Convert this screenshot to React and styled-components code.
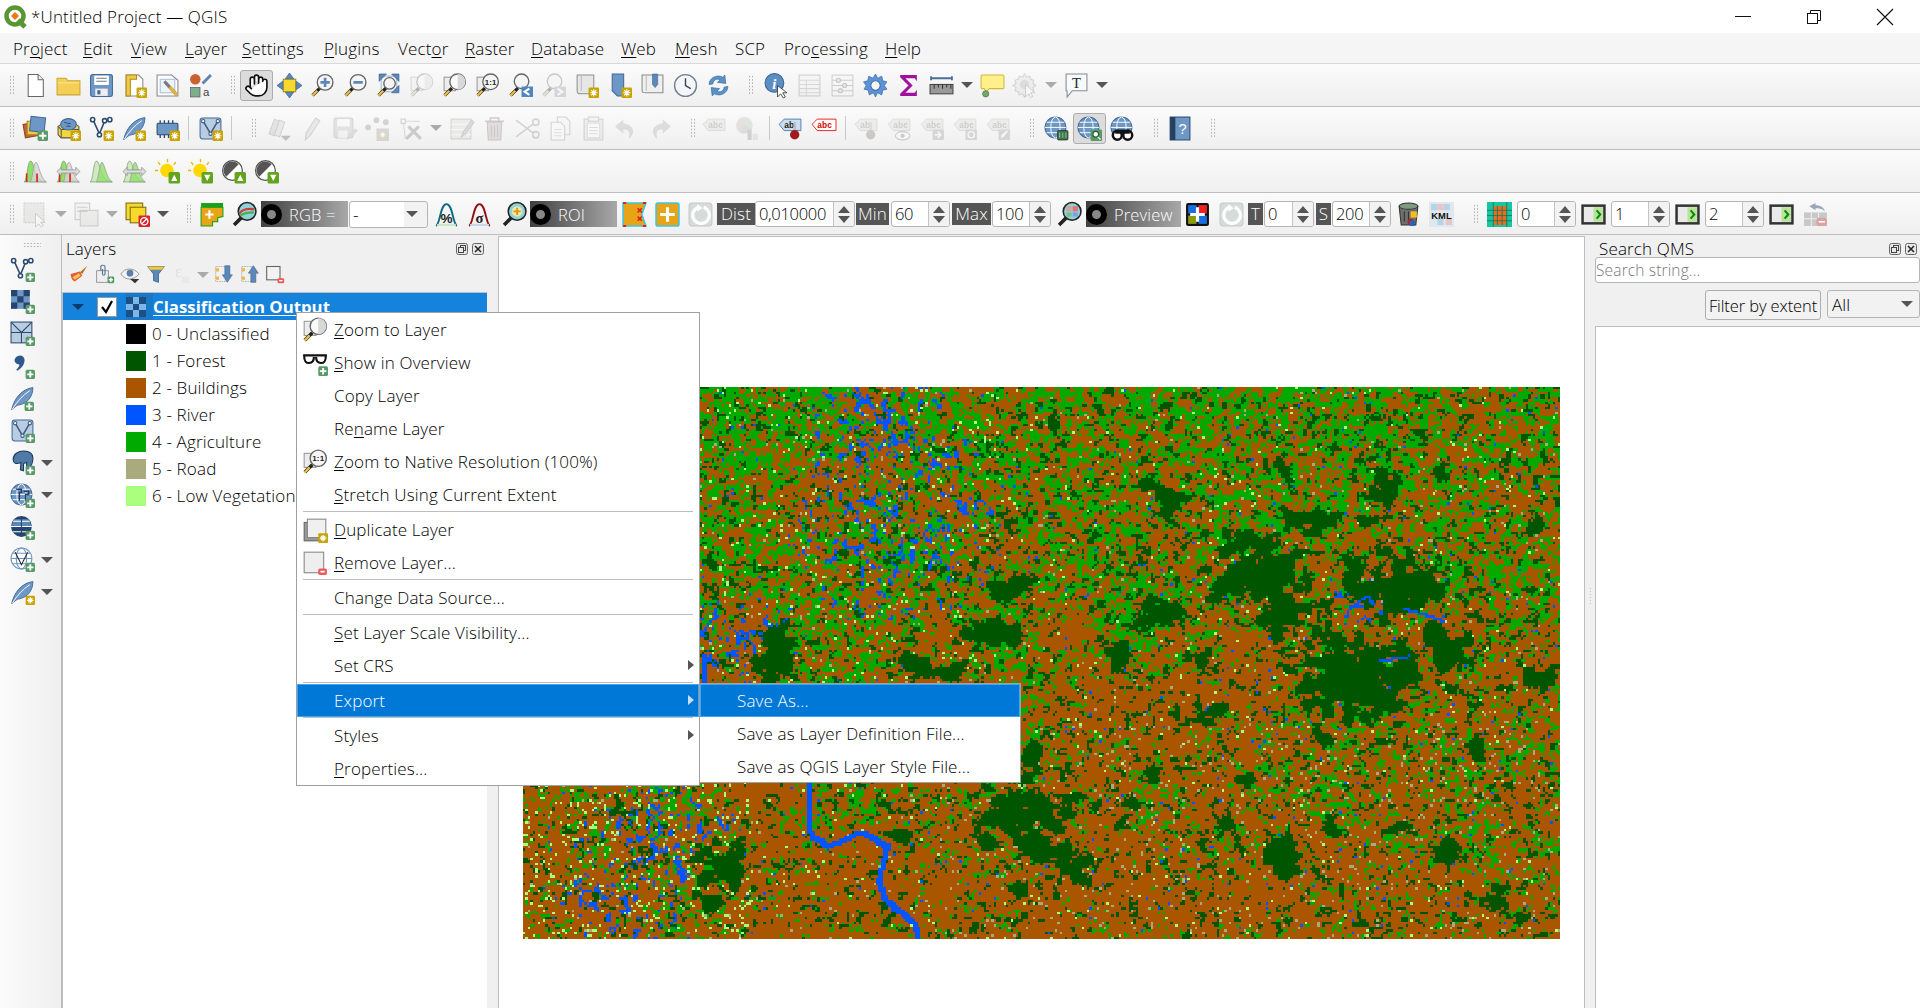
import React, { useEffect, useRef } from 'react';
import styled, { createGlobalStyle } from 'styled-components';
import { Hand } from 'lucide-react';

const FONT = '"Open Sans", "Noto Sans", "Liberation Sans", sans-serif';

const GlobalStyle = createGlobalStyle`
  html, body { margin: 0; padding: 0; overflow: hidden; background: #f0f0f0; }
  body { font-family: ${FONT}; font-size: 17px; font-weight: 300; color: #000; letter-spacing: 0.15px; }
`;

// ---- small icon parts ----
const BLUE = '#6d97c4';
const BLUE_D = '#44699a';

const Star = ({ x = 14, y = 14, s = 10 }) => (
  <g>
    <rect x={x} y={y} width={s} height={s} rx="1" fill="#c9a300" />
    <path
      d={`M${x + s / 2} ${y + 1.5}v${s - 3}M${x + 1.5} ${y + s / 2}h${s - 3}M${x + 2.5} ${y + 2.5}l${s - 5} ${s - 5}M${x + s - 2.5} ${y + 2.5}l${5 - s} ${s - 5}`}
      stroke="#fff"
      strokeWidth="1.1"
    />
  </g>
);
const PlusB = ({ x = 15, y = 15, s = 9, c = '#5a9a68' }) => (
  <g>
    <rect x={x} y={y} width={s} height={s} rx="1.5" fill={c} />
    <path d={`M${x + s / 2} ${y + 1.5}v${s - 3}M${x + 1.5} ${y + s / 2}h${s - 3}`} stroke="#fff" strokeWidth="1.8" />
  </g>
);
const MinusB = () => (
  <g>
    <rect x="15" y="17" width="8" height="6" rx="1.5" fill="#ee5a5a" />
    <path d="M17 20h4" stroke="#fff" strokeWidth="1.6" />
  </g>
);
const Loupe = ({ cx = 14.5, cy = 9, r = 7.5, fill = '#f5f5f5' }) => (
  <g>
    <line x1="2.5" y1="21.5" x2="9.5" y2="14.5" stroke="#222" strokeWidth="3.2" />
    <line x1="2.5" y1="21.5" x2="7" y2="17" stroke="#eebc3f" strokeWidth="2.2" />
    <circle cx={cx} cy={cy} r={r} fill={fill} stroke="#666" strokeWidth="1.3" />
  </g>
);
const HalfLoupe = () => (
  <g>
    <rect x="2" y="4" width="11" height="13" fill="#ececec" stroke="#999" />
    <Loupe cx={15} cy={8.5} r={7.5} fill="#fafafa" />
    <path d="M15 1a7.5 7.5 0 0 1 0 15z" fill="#d8d8d8" />
  </g>
);
const Globe = ({ cx = 11, cy = 11, r = 10 }) => (
  <g>
    <circle cx={cx} cy={cy} r={r} fill={BLUE} stroke={BLUE_D} />
    <ellipse cx={cx} cy={cy} rx={r * 0.45} ry={r} fill="none" stroke="#fff" strokeWidth="0.9" />
    <path d={`M${cx - r} ${cy}h${2 * r}M${cx - r + 1.5} ${cy - r / 2}h${2 * r - 3}M${cx - r + 1.5} ${cy + r / 2}h${2 * r - 3}`} stroke="#fff" strokeWidth="0.9" />
  </g>
);
const Vee = ({ c = '#2b4a6f' }) => (
  <g fill="none" stroke={c} strokeWidth="1.5">
    <path d="M4 4l6 13 5-12 5-1" />
    <circle cx="3.5" cy="3.5" r="2" fill="#fff" />
    <circle cx="10" cy="18" r="2" fill="#fff" />
    <circle cx="15" cy="4.5" r="2" fill="#fff" />
    <circle cx="20" cy="3.5" r="2" fill="#fff" />
  </g>
);
const Feather = () => (
  <g>
    <path d="M1.5 23C4 12 11 3 22 1.5 22 9 18 17 7 18.5L3 21.5z" fill={BLUE} stroke={BLUE_D} strokeWidth="0.9" />
    <path d="M2 22.5C7 15 12 9 19 4.5" stroke="#fff" strokeWidth="0.9" fill="none" />
  </g>
);
const MeshV = () => (
  <g>
    <rect x="2" y="2" width="20" height="20" rx="2.5" fill="#b8cce2" stroke={BLUE_D} />
    <path d="M5 5l7 12 7-12" fill="none" stroke="#3a5a80" strokeWidth="1.4" />
    <circle cx="5" cy="5" r="1.6" fill="#fff" stroke="#3a5a80" />
    <circle cx="12" cy="17" r="1.6" fill="#fff" stroke="#3a5a80" />
    <circle cx="19" cy="5" r="1.6" fill="#fff" stroke="#3a5a80" />
  </g>
);
const Checker = () => (
  <g>
    <rect x="1" y="1" width="18" height="18" fill={BLUE} />
    <path d="M1 1h6v6H1zM13 1h6v6h-6zM7 7h6v6H7zM1 13h6v6H1zM13 13h6v6h-6z" fill="#26456e" />
  </g>
);
const Hist = ({ red, arrows, gray }) => (
  <g>
    <path d="M1 22C4 22 4 3 7 2c2.5-.5 3 6 5 11s4 8 10 9z" fill={gray ? '#cfe9c0' : '#8fe06a'} stroke="#7f9f70" strokeWidth="0.7" />
    <path d="M7 22c2-2 3-18 5.5-19 2.5 1 4 16 10 19z" fill={gray ? '#8fe06a' : '#d6d6d6'} fillOpacity=".8" stroke="#999" strokeWidth="0.7" />
    {red && <path d="M3.5 14v8M13.5 14v8" stroke="#e22222" strokeWidth="1.6" />}
    {arrows && <path d="M1 12l4-4v2.5h14V8l4 4-4 4v-2.5H5V16z" fill="#ddd" stroke="#888" strokeWidth="0.7" />}
  </g>
);
const UpDown = ({ down }) => (
  <g>
    <rect x="13" y="12.5" width="11" height="11" rx="1.5" fill="#63a41f" />
    <path d={down ? 'M15.5 15h6l-3 6z' : 'M18.5 15l3 6h-6z'} fill="#fff" />
  </g>
);
const Sun = ({ down }) => (
  <g>
    <path d="M12 0v3M3 3l2 2.5M20 3l-2 2.5M0 11h3" stroke="#e6b800" strokeWidth="1.3" />
    <circle cx="11.5" cy="11" r="6.5" fill="#ffd800" />
    <UpDown down={down} />
  </g>
);
const Contrast = ({ down }) => (
  <g>
    <circle cx="11" cy="11" r="9.5" fill="#fff" stroke="#555" strokeWidth="1.2" />
    <path d="M11 2.5a8.5 8.5 0 0 0-6 14.5L17 5a8.5 8.5 0 0 0-6-2.5z" fill="#555" />
    <UpDown down={down} />
  </g>
);
const Tag = ({ c = '#ddd8c0', t = 'abc', s = '#999', tc = '#777', w = 21 }) => (
  <g>
    <path d={`M1 8l5-5h${w - 5}v11H6z`} fill={c} stroke={s} strokeWidth="0.8" />
    <text x="6" y="11.5" fontSize="8" fontWeight="700" fontFamily="Liberation Sans, sans-serif" fill={tc}>{t}</text>
  </g>
);
const Tile = () => (
  <g>
    <rect x="1.5" y="3.5" width="21" height="17" fill="#e9e9e9" stroke="#333" strokeWidth="2.4" />
    <rect x="12" y="5" width="9" height="14" fill="#b7e39a" />
    <path d="M15 8l3.5 4-3.5 4" fill="none" stroke="#0a8a0a" strokeWidth="2" />
  </g>
);

// every toolbar / panel icon, drawn on a 24 x 24 grid
const ICONS = {
  new: <><path d="M5 1.5h9.5l5 5v16H5z" fill="#fff" stroke="#666" /><path d="M14.5 1.5v5h5" fill="#eee" stroke="#666" /></>,
  open: <><path d="M1 5h8.5l2 2.5H23V21H1z" fill="#f5cf55" stroke="#c8a53a" /><path d="M1.5 9.5h21" stroke="#fbe48c" /></>,
  save: <><rect x="1.5" y="1.5" width="21" height="21" rx="2" fill={BLUE} stroke={BLUE_D} /><rect x="5" y="2.5" width="14" height="9" fill="#fff" /><path d="M7 5h10M7 8h10" stroke="#777" /><rect x="6" y="15" width="12" height="7" fill="#eee" /><rect x="8" y="16.5" width="3" height="4" fill={BLUE_D} /></>,
  newLayout: <><path d="M4 2h12l4 4v16H4z" fill="#fff" stroke="#888" /><path d="M4 2h10v4H8v16H4z" fill="#f0c94a" stroke="#b08a10" /><Star /></>,
  layouts: <><path d="M2 2h14l6 5v15H2z" fill="#fff" stroke="#888" /><rect x="5" y="6" width="14" height="13" fill="#eef2fa" stroke="#a9bcd8" /><path d="M9 8l12 13" stroke="#7a7a7a" strokeWidth="3" /><path d="M14 13.5l7 7.5" stroke="#e2b53a" strokeWidth="3" /></>,
  styleMgr: <><circle cx="7" cy="6" r="5" fill="#c8622e" /><path d="M14 10l8-8" stroke="#5b86b5" strokeWidth="2.8" /><rect x="2.5" y="14" width="9" height="9" fill="#7fae8a" stroke="#557" strokeWidth="0.7" /><text x="14.5" y="22.5" fontSize="11" fontFamily="Liberation Sans, sans-serif" fill="#444">a</text></>,
  pan: <Hand x={0} y={0} width={24} height={24} fill="#fff" stroke="#111" strokeWidth={1.6} />,
  panSel: <><rect x="6" y="6" width="12" height="12" fill="#f6d92b" stroke="#a08a20" /><path d="M12 0l4 5.5H8zM12 24l-4-5.5h8zM0 12l5.5-4v8zM24 12l-5.5 4V8z" fill="#5b88b7" stroke="#3c6390" strokeWidth="0.7" /></>,
  zoomIn: <><Loupe /><path d="M14.5 4.5v9M10 9h9" stroke="#5b88b7" strokeWidth="2.6" /></>,
  zoomOut: <><Loupe /><path d="M10 9h9" stroke="#5b88b7" strokeWidth="2.6" /></>,
  zoomFull: <><rect x="5" y="3" width="15" height="15" fill="none" stroke="#9bb5d2" /><path d="M3 1h7L3 8zM22 1h-7l7 7zM22 19h-7l7-7z" fill="#5b88b7" stroke="#3c6390" strokeWidth="0.7" /><Loupe cx={13} cy={10} r={5.5} /></>,
  zoomSel: <HalfLoupe />,
  zoomLayer: <HalfLoupe />,
  zoomNative: <><rect x="2" y="4" width="11" height="13" fill="#ececec" stroke="#999" /><Loupe cx={15} cy={8.5} r={7.5} /><text x="15" y="11.5" fontSize="7.5" fontWeight="700" textAnchor="middle" fontFamily="Liberation Sans, sans-serif" fill="#222">1:1</text></>,
  zoomLast: <><Loupe cx={13} cy={8} r={7} /><rect x="13" y="13" width="11" height="10" fill="#4f86bd" /><path d="M20.5 15l-4.5 3 4.5 3" fill="none" stroke="#fff" strokeWidth="2" /></>,
  zoomNext: <><Loupe cx={13} cy={8} r={7} /><rect x="13" y="13" width="11" height="10" fill="#9a9a9a" /><path d="M16 15l4.5 3-4.5 3" fill="none" stroke="#fff" strokeWidth="2" /></>,
  newMap: <><path d="M3 2h16v18H6c-2 0-3-1-3-3z" fill="#e6e6e6" stroke="#8f8f8f" /><path d="M7 2v15" stroke="#bbb" /><Star /></>,
  newBookmark: <><path d="M5 1h11v15l4 6H10l-5-5z" fill="#6d97c4" stroke={BLUE_D} /><Star /></>,
  bookmarks: <><path d="M2 2h20v17H6c-3 0-4 0-4-3z" fill="#efefef" stroke="#8a8a8a" /><path d="M6 2v15" stroke="#bbb" /><path d="M12 1h5v10l-2.5 3-2.5-3z" fill="#5b88b7" stroke={BLUE_D} strokeWidth="0.6" /></>,
  clock: <><circle cx="12" cy="12" r="10.5" fill="#f4f6f9" stroke="#6f7f92" strokeWidth="1.3" /><path d="M12 5v7l5 3" fill="none" stroke="#33414f" strokeWidth="1.3" /></>,
  refresh: <><path d="M3 11c0-6 7-10 13-7l2-2 1 8-8-1 2.5-2.5c-3-1.5-6.5 0-7 4z" fill="#5b93c9" stroke="#3b6d9f" strokeWidth="0.7" /><path d="M21 13c0 6-7 10-13 7l-2 2-1-8 8 1-2.5 2.5c3 1.5 6.5 0 7-4z" fill="#5b93c9" stroke="#3b6d9f" strokeWidth="0.7" /></>,
  identify: <><circle cx="10" cy="9.5" r="9" fill="#5b8fc4" stroke="#3c6390" /><text x="10" y="15" fontSize="14" fontWeight="700" fontStyle="italic" textAnchor="middle" fontFamily="Liberation Serif, serif" fill="#fff">i</text><path d="M13 12v11l3-3 2.5 4 2-1-2.5-4h4z" fill="#fff" stroke="#333" strokeWidth="0.8" /></>,
  attrTable: <><rect x="2" y="2" width="20" height="20" fill="#f2f2f2" stroke="#777" /><path d="M2 7h20M2 11h20M2 15h20M2 19h20M9 7v15" stroke="#999" /></>,
  abacus: <><rect x="2" y="2" width="20" height="20" fill="#f6f6f6" stroke="#777" /><path d="M2 7h20M2 12h20M2 17h20" stroke="#777" /><circle cx="8" cy="7" r="2" fill="#ccc" stroke="#666" /><circle cx="14" cy="12" r="2" fill="#ccc" stroke="#666" /><circle cx="10" cy="17" r="2" fill="#ccc" stroke="#666" /></>,
  gear: <><path d="M12 1l2 4 4-2 1 4.5 4 1-2.5 3.5 2.5 3.5-4 1-1 4.5-4-2-2 4-2-4-4 2-1-4.5-4-1L3 12 .5 8.5l4-1L5.5 3l4 2z" fill="#5b93d6" stroke="#3c6ea8" strokeWidth="0.7" /><circle cx="12" cy="12" r="4.5" fill="#f5f5f5" stroke="#3c6ea8" /></>,
  sigma: <path d="M4 2h16v6l-2-3H9l7 7-7 7h9l2-3v6H4v-2l8-8-8-8z" fill="#a0119f" />,
  ruler: <><path d="M2 5h20M2 3v4M22 3v4" stroke="#4a6f99" strokeWidth="1.8" /><rect x="1" y="11" width="22" height="9" fill="#999" stroke="#444" /><path d="M5 11v4M9 11v3M13 11v4M17 11v3M21 11v4" stroke="#333" /></>,
  mapTip: <><path d="M2 2h20a1 1 0 0 1 1 1v11a1 1 0 0 1-1 1H9l-3 3-2-3H2a1 1 0 0 1-1-1V3a1 1 0 0 1 1-1z" fill="#fff08c" stroke="#d4b73a" /><circle cx="5.5" cy="20" r="3" fill="#7aa56f" stroke="#47783e" strokeWidth="0.7" /></>,
  tipAction: <><path d="M11 1l2 3 3-1 1 3 3 1-1 3 3 2-3 2 1 3-3 1-1 3-3-1-2 3-2-3-3 1-1-3-3-1 1-3-3-2 3-2-1-3 3-1 1-3 3 1z" fill="#ddd" stroke="#888" /><circle cx="11" cy="11" r="4.5" fill="#aaa" /><path d="M12 11v12l3-3 2 3.5 2-1-2-3.5h4z" fill="#fff" stroke="#555" strokeWidth="0.7" /></>,
  textAnn: <><path d="M2 1h20v16H8l-5 6v-6H2z" fill="#f4fbff" stroke="#8a8a8a" /><text x="12" y="14" fontSize="14" textAnchor="middle" fontFamily="Liberation Serif, serif" fill="#222">T</text></>,

  addLayers: <><rect x="1" y="7" width="12" height="13" fill="#c8622e" stroke="#8f4420" transform="rotate(-10 7 13)" /><rect x="4" y="5" width="12" height="13" fill="#f0c94a" stroke="#a08a20" /><rect x="7" y="1" width="14" height="14" fill={BLUE} stroke={BLUE_D} transform="rotate(6 14 8)" /><PlusB x={14} y={14} s={10} /></>,
  geoPkg: <><path d="M2 10l10-7 10 7v11H5L2 18z" fill="#f2d640" stroke="#555" /><path d="M2 10l3 3h17M5 13v8" fill="none" stroke="#555" /><ellipse cx="12" cy="8" rx="7.5" ry="5.5" fill={BLUE} stroke={BLUE_D} /><path d="M8 6c2 0 3 2 6 1M10 10c2-1 3 0 4 0" stroke="#2c4a6e" fill="none" /><Star /></>,
  newVec: <><Vee /><Star /></>,
  newFeather: <><Feather /><Star x={13} y={14} /></>,
  chip: <><rect x="2" y="7" width="20" height="11" rx="1" fill={BLUE} stroke="#2c4a6e" /><path d="M5 4v3M9 4v3M13 4v3M17 4v3M5 18v3M9 18v3M13 18v3" stroke="#2c4a6e" strokeWidth="1.3" /><Star /></>,
  newMesh: <><MeshV /><Star /></>,
  toggleEdit: <><path d="M3 17l5-14 5 2-5 14z" fill="#bbb" stroke="#888" /><path d="M8 18l5-14 5 2-5 14z" fill="#ccc" stroke="#888" /><path d="M14 19h10l-5 5z" fill="#555" /></>,
  pencil: <path d="M6 23l1-7 9-14 4 2.5-9 14z" fill="#ccc" stroke="#888" />,
  saveEdit: <><rect x="2" y="2" width="18" height="19" rx="2" fill="#bbb" stroke="#888" /><rect x="5" y="3" width="12" height="7" fill="#fff" /><rect x="6" y="14" width="9" height="7" fill="#eee" /><path d="M14 23l1-4 7-7 3 2-7 7z" fill="#aaa" /></>,
  nodes: <><circle cx="3" cy="11" r="2.8" fill="#888" /><circle cx="11" cy="4" r="2.8" fill="#888" /><circle cx="20" cy="6" r="2.8" fill="#888" /><rect x="11" y="12" width="12" height="12" fill="#999" /><Star x={13} y={14} s={8} /></>,
  vertexTool: <><path d="M5 5h16M5 5l2 17" stroke="#999" fill="none" /><rect x="3" y="3" width="4" height="4" fill="#fff" stroke="#777" /><path d="M8 22l12-12M10 10l12 12" stroke="#777" strokeWidth="3" /></>,
  attrEdit: <><rect x="2" y="3" width="19" height="19" fill="#d8d8c8" stroke="#888" /><path d="M2 8h19M2 13h19M2 18h19" stroke="#fff" /><path d="M12 20l2-5 8-11 2 2-8 11z" fill="#aaa" stroke="#777" /></>,
  trash: <><path d="M3 5h18M8 5V2h8v3" fill="none" stroke="#966" strokeWidth="1.5" /><path d="M5 6h14l-1 17H6z" fill="#c9a8a8" stroke="#866" /><path d="M9 9v11M12 9v11M15 9v11" stroke="#866" /></>,
  cut: <><path d="M1 4l16 12M1 20L17 8" stroke="#888" strokeWidth="1.5" /><circle cx="20" cy="18" r="3" fill="none" stroke="#888" strokeWidth="1.5" /><circle cx="20" cy="6" r="3" fill="none" stroke="#888" strokeWidth="1.5" /></>,
  copy: <><path d="M9 1h8l4 4v13H9z" fill="#f4f4f4" stroke="#888" /><path d="M3 6h9l4 4v13H3z" fill="#fff" stroke="#888" /><path d="M6 13h7M6 16h7M6 19h7" stroke="#aaa" /></>,
  paste: <><rect x="3" y="3" width="18" height="20" fill="#ddd" stroke="#888" /><rect x="7" y="1" width="10" height="4" fill="#eee" stroke="#888" /><path d="M6 7h12v14H6z" fill="#fff" stroke="#aaa" /><path d="M8 11h8M8 14h8M8 17h8" stroke="#aaa" /></>,
  undo: <path d="M9 3L1 10l8 7v-4c5 0 7 2 5 9 6-4 7-13-5-15z" fill="#aaa" />,
  redo: <path d="M15 3l8 7-8 7v-4c-5 0-7 2-5 9-6-4-7-13 5-15z" fill="#aaa" />,
  labelAbc: <Tag />,
  pieBar: <><circle cx="9" cy="9" r="8" fill="#c9b79a" /><path d="M9 9V1a8 8 0 0 1 7 11z" fill="#9ec9a8" /><path d="M9 9l7 3a8 8 0 0 1-11 4z" fill="#a0aec2" /><rect x="12" y="13" width="4" height="10" fill="#7c8a90" /><rect x="17" y="17" width="5" height="6" fill="#bcc" /></>,
  labelTemp: <><Tag c="#c9def2" s="#3c6ea8" tc="#222" t="ab" /><path d="M16 6v9" stroke="#bbb" strokeWidth="2.5" /><circle cx="16" cy="18" r="4.5" fill="#a01c1c" /></>,
  labelRed: <Tag c="#fff" s="#ee0000" tc="#d40000" w={23} />,
  labelRule: <><Tag t="ab" /><path d="M16 6v9" stroke="#aaa" strokeWidth="2.5" /><circle cx="16" cy="18" r="4.5" fill="#8c6a6a" /></>,
  labelEye: <><Tag /><ellipse cx="15" cy="19" rx="7" ry="4" fill="#fff" stroke="#777" /><circle cx="15" cy="19" r="2" fill="#777" /></>,
  labelMove: <><Tag /><rect x="12" y="13" width="11" height="10" rx="1" fill="#999" /><path d="M14 18h5M17 15l3 3-3 3" stroke="#fff" strokeWidth="1.5" fill="none" /></>,
  labelRot: <><Tag /><rect x="12" y="13" width="11" height="10" rx="1" fill="#999" /><circle cx="17.5" cy="18" r="3" fill="none" stroke="#fff" strokeWidth="1.4" /></>,
  labelPen: <><Tag /><rect x="12" y="13" width="11" height="10" rx="1" fill="#999" /><path d="M14 21l1-3 5-4 1 1-4 5z" fill="#fff" /></>,
  globeTrash: <><Globe /><rect x="13" y="14" width="10" height="9" rx="1" fill="#3c7a45" stroke="#222" strokeWidth="0.7" /><path d="M15 16v5M18 16v5M21 16v5" stroke="#bcd" strokeWidth="0.7" /></>,
  globeZoom: <><Globe /><rect x="13" y="13" width="11" height="11" rx="1" fill="#5a9a68" /><circle cx="18" cy="17.5" r="2.8" fill="#fff" stroke="#2c5a34" strokeWidth="1.2" /><path d="M20 20l2.5 2.5" stroke="#fff" strokeWidth="1.2" /></>,
  globeBinoc: <><Globe /><circle cx="7" cy="18.5" r="4.3" fill="#fff" stroke="#111" strokeWidth="2.4" /><circle cx="17" cy="18.5" r="4.3" fill="#fff" stroke="#111" strokeWidth="2.4" /><path d="M5 13h14v4H5z" fill="#111" /></>,
  help: <><rect x="3" y="1" width="19" height="22" fill={BLUE} stroke="#2a4d75" /><rect x="3" y="1" width="5" height="22" fill="#25415f" /><text x="15" y="17" fontSize="14" textAnchor="middle" fontFamily="Liberation Sans, sans-serif" fill="#fff">?</text></>,

  histRed: <Hist red />,
  histRedArrow: <Hist red arrows />,
  histGray: <Hist gray />,
  histGrayArrow: <Hist gray arrows />,
  sunUp: <Sun />,
  sunDown: <Sun down />,
  contUp: <Contrast />,
  contDown: <Contrast down />,

  select: <><rect x="1" y="1" width="19" height="19" fill="#cfcfc4" stroke="#777" strokeDasharray="2 1" /><path d="M12 11v13l3-3 2.5 3 2-1.5-2.5-3h4z" fill="#fff" stroke="#666" strokeWidth="0.8" /></>,
  attrList: <><rect x="1" y="1" width="14" height="16" fill="#e8e8e8" stroke="#777" /><rect x="6" y="8" width="17" height="15" fill="#d8d8c8" stroke="#777" /><path d="M3 5h10M3 9h10" stroke="#777" /></>,
  deselect: <><rect x="1" y="1" width="16" height="16" fill="#f6d92b" stroke="#7a6a10" /><rect x="5" y="5" width="15" height="15" fill="#f6d92b" stroke="#7a6a10" /><rect x="13" y="13" width="11" height="11" rx="1" fill="#d9232e" /><circle cx="18.5" cy="18.5" r="3.5" fill="none" stroke="#fff" strokeWidth="1.3" /><path d="M16 21l5-5" stroke="#fff" strokeWidth="1.3" /></>,
  scpBand: <><path d="M5 6l14-5h4v13l-5 1v4h-5v4H4z" fill="#222" /><path d="M2 1h21v4H2z" fill="#19a119" /><path d="M2 5h21v9l-5 1v4h-5v4H2z" fill="#e6a416" stroke="#19a119" strokeWidth="1" /><path d="M10 8v8M6 12h8" stroke="#fff" strokeWidth="2" /></>,
  scpZoom: <><line x1="2" y1="22" x2="9" y2="15" stroke="#222" strokeWidth="3.4" /><circle cx="14.5" cy="9" r="8.5" fill="#8ed3d9" stroke="#222" strokeWidth="1.5" /><path d="M7 11c3-4 9-5 14-4" stroke="#d43a3a" strokeWidth="2.2" fill="none" /><path d="M8 13c4-3 8-3 13-3" stroke="#4fae4f" strokeWidth="2.2" fill="none" /></>,
  scpPct: <><path d="M2 23C6 21 6 2 12 2s6 19 10 21" fill="none" stroke="#0e6b7d" strokeWidth="1.8" /><path d="M3 22h18" stroke="#c7e6c7" strokeWidth="2" /><text x="12" y="20" fontSize="13" fontWeight="700" textAnchor="middle" fontFamily="Liberation Sans, sans-serif" fill="#222">%</text></>,
  scpSigma: <><path d="M2 23C6 21 6 2 12 2s6 19 10 21" fill="none" stroke="#8f1111" strokeWidth="1.8" /><path d="M3 22h18" stroke="#c7d6e6" strokeWidth="2" /><text x="12" y="20" fontSize="14" fontWeight="700" textAnchor="middle" fontFamily="Liberation Serif, serif" fill="#222">σ</text></>,
  scpPlusZoom: <><line x1="2" y1="22" x2="9" y2="15" stroke="#222" strokeWidth="3.4" /><circle cx="14.5" cy="9" r="8.5" fill="#8ed3d9" stroke="#222" strokeWidth="1.5" /><circle cx="14.5" cy="9" r="5" fill="#f2e6a8" /><path d="M14.5 5.5v7M11 9h7" stroke="#d49a1a" strokeWidth="1.8" /></>,
  scpRoi: <><path d="M1 1h22l-4 11 4 11H1z" fill="#e6a416" stroke="#3cc4e8" strokeWidth="1.5" /><path d="M1 1h3M20 1h3M1 23h3M20 23h3" stroke="#e21f1f" strokeWidth="2" /><path d="M15 6l4 4m0-4l-4 4M15 14l4 4m0-4l-4 4" stroke="#e21f1f" strokeWidth="1.5" /></>,
  scpPlus: <><rect x="1" y="1" width="22" height="22" rx="2" fill="#e6a416" stroke="#3cc4e8" strokeWidth="1.5" /><path d="M12 5v14M5 12h14" stroke="#fff" strokeWidth="3" /></>,
  scpReset: <><rect x="1" y="1" width="22" height="22" rx="3" fill="#d6dcda" stroke="#c2cac8" /><path d="M10 5a8 8 0 1 0 5 0" fill="none" stroke="#fff" strokeWidth="3" /><path d="M9 2v7l5-3z" fill="#fff" /></>,
  scpMag: <><line x1="2" y1="22" x2="9" y2="15" stroke="#222" strokeWidth="3.4" /><circle cx="14.5" cy="9" r="8.5" fill="#8ed3d9" stroke="#222" strokeWidth="1.5" /><rect x="9" y="4" width="5" height="5" fill="#d9a0a0" /><rect x="15" y="4" width="5" height="5" fill="#e27373" /><rect x="9" y="10" width="5" height="4" fill="#7fbf7f" /><rect x="15" y="10" width="5" height="4" fill="#7f9fe2" /></>,
  scpRun: <><rect x="1" y="1" width="22" height="22" rx="2" fill="#111" /><rect x="3" y="3" width="8" height="8" fill="#1a6fe0" /><rect x="13" y="3" width="8" height="8" fill="#e22" /><rect x="3" y="13" width="8" height="8" fill="#8a9a10" /><rect x="13" y="13" width="8" height="8" fill="#1a6fe0" /><path d="M12 5v14M5 12h14" stroke="#fff" strokeWidth="3" /></>,
  scpBin: <><path d="M3 4h18l-2 18H5z" fill="#6f6f6f" stroke="#333" /><ellipse cx="12" cy="4" rx="9" ry="3" fill="#7e9a80" stroke="#333" /><path d="M8 9v10M12 9v10" stroke="#333" /><circle cx="14" cy="19" r="3" fill="#b22" /><rect x="14" y="9" width="6" height="6" fill="#f0c020" /><rect x="13" y="18" width="5" height="5" fill="#26b" /></>,
  scpKml: <><rect x="0" y="0" width="24" height="24" fill="#dfe8ee" /><path d="M2 2h6v6H2zM14 2h6v6h-6zM8 16h6v6H8z" fill="#b7d3ea" /><path d="M8 2h6v6H8zM16 16h6v6h-6z" fill="#e9c5c5" /><text x="12" y="16" fontSize="9" fontWeight="700" textAnchor="middle" fontFamily="Liberation Sans, sans-serif" fill="#111">KML</text></>,
  scpGrid: <><rect x="0" y="0" width="24" height="24" fill="#17c6a0" /><rect x="6" y="4" width="13" height="18" fill="#ef6a1a" /><path d="M6 0v24M10 4v18M14.5 4v18M19 0v24M0 8h24M0 13h24M0 18h24" stroke="#0a7a60" strokeWidth="0.8" /></>,
  scpTile: <Tile />,
  scpUndo: <><path d="M6 4l6-3v2c5 0 8 2 9 6-3-3-6-3-9-3v2z" fill="#9aa6c0" /><path d="M1 10h22v13H1z" fill="#c8c8c8" /><path d="M1 16h22M8 10v13M15 10v13" stroke="#eee" /><rect x="13" y="15" width="10" height="8" rx="2" fill="#d9a3a3" /><path d="M15 19h6" stroke="#fff" strokeWidth="1.5" /></>,

  addVec: <><Vee /><PlusB /></>,
  addRaster: <><Checker /><PlusB /></>,
  addMesh: <><rect x="1" y="1" width="20" height="20" fill="#b8cce2" stroke="#2c4a6e" /><path d="M1 1l10 10L21 1M1 11h20M11 11v10" fill="none" stroke="#2c4a6e" /><PlusB /></>,
  addCsv: <><path d="M5 4c3-4 9-3 9 2 0 4-3 8-7 10l-1-1c2-2 3-3 3-5-3 0-6-3-4-6z" fill="#2c5a8a" /><PlusB /></>,
  addFeather: <><Feather /><PlusB x={14} /></>,
  addMeshV: <><MeshV /><PlusB x={15} y={15} /></>,
  addPg: <><path d="M3 9c0-5 5-8 10-8s9 2 9 7-3 9-4 10l-2-1v-5l-3 1v7l-3-1 .5-7C6 14 3 13 3 9z" fill="#4f7aa8" stroke="#1f3a5a" /><PlusB /></>,
  addWms: <><Globe /><path d="M6 6h5v3H9v8M13 8h5v3h-3v6" stroke="#263e5c" strokeWidth="1.4" fill="none" /><PlusB /></>,
  addWcs: <><circle cx="11" cy="11" r="10" fill="#26456e" /><path d="M4 4h14l3 7H1z" fill="#5b88b7" /><path d="M1 11h20M3 6h16M3 16h16" stroke="#fff" /><path d="M11 1v20" stroke="#26456e" /><PlusB /></>,
  addWfs: <><circle cx="11" cy="11" r="10" fill="#fff" stroke={BLUE} /><path d="M1 11h20M3 6h16M3 16h16" stroke={BLUE} /><ellipse cx="11" cy="11" rx="5" ry="10" fill="none" stroke={BLUE} /><path d="M5 5l6 12 6-12" fill="none" stroke="#222" /><PlusB /></>,
  addSpatial: <><Feather /><Star x={15} y={15} s={9} /></>,

  brush: <><path d="M13 10l9-8-6 10z" fill="#b87a20" /><path d="M2 12l11-3 3 5-9 7c-3-1-5-5-5-9z" fill="#e25b3c" /><path d="M4 16l8-5 2 3-7 5z" fill="#f0c94a" /></>,
  addGroup: <><rect x="2" y="8" width="14" height="14" fill="#eee" stroke="#888" /><path d="M7 8V3c0-2 5-2 5 0v9c0 2-3 2-3 0V6" fill="none" stroke="#5a7a9a" strokeWidth="1.4" /><PlusB x={15} y={15} s={8} /></>,
  eye: <><path d="M1 12c5-8 15-8 22 0-7 8-17 8-22 0z" fill="#f2f2f2" stroke="#888" /><circle cx="12" cy="11" r="4" fill="#5b7fa8" /><path d="M12 18h11l-5 5z" fill="#333" /></>,
  funnel: <><path d="M2 3h20l-7 9v10l-6-2v-8z" fill="#5b88b7" stroke="#3c6390" /><path d="M2 3h20l-3 4H5z" fill="#f2c63a" /></>,
  epsilon: <><text x="9" y="15" fontSize="19" textAnchor="middle" fontFamily="Liberation Serif, serif" fill="#bbb">ε</text><path d="M13 15h9v8h-9z" fill="#ddd" /></>,
  expand: <><rect x="2" y="3" width="12" height="18" fill="#f0f0f0" stroke="#aaa" strokeDasharray="2 1" /><rect x="2" y="5" width="4" height="4" fill="#eeb84a" /><rect x="2" y="15" width="4" height="4" fill="#eeb84a" /><path d="M13 2h6v11h3l-6 9-6-9h3z" fill="#5b88b7" stroke="#3c6390" strokeWidth="0.7" /></>,
  collapse: <><rect x="2" y="3" width="12" height="18" fill="#f0f0f0" stroke="#aaa" strokeDasharray="2 1" /><rect x="2" y="5" width="4" height="4" fill="#eeb84a" /><rect x="2" y="15" width="4" height="4" fill="#eeb84a" /><path d="M13 22h6V11h3l-6-9-6 9h3z" fill="#5b88b7" stroke="#3c6390" strokeWidth="0.7" /></>,
  remove: <><rect x="2" y="3" width="16" height="16" fill="#f2f2f2" stroke="#666" strokeWidth="1.3" /><MinusB /></>,

  glasses: <><path d="M1 5h22M2 5c0 5 1 7 4.5 7S11 10 11 6.5M22 5c0 5-1 7-4.5 7S13 10 13 6.5" fill="none" stroke="#111" strokeWidth="2" /><PlusB x={15} y={15} s={9} /></>,
  duplicate: <><rect x="2" y="5" width="16" height="17" fill="#999" stroke="#666" /><rect x="5" y="2" width="17" height="17" fill="#f0f0f0" stroke="#888" /><Star x={15} y={15} s={9} /></>,
  removeLayer: <><rect x="2" y="2" width="18" height="19" fill="#eee" stroke="#888" /><MinusB /></>,
};

const IconSvg = styled.svg`
  flex: none;
  display: block;
  overflow: visible;
  ${(p) => p.$off && 'opacity: .32; filter: saturate(.35);'}
`;

const Icon = ({ name, size = 25, off }) => (
  <IconSvg viewBox="0 0 24 24" width={size} height={size} $off={off}>
    {ICONS[name]}
  </IconSvg>
);

// ---- window chrome ----
const Win = styled.div`
  width: 1920px;
  height: 1008px;
  display: flex;
  flex-direction: column;
  position: relative;
  overflow: hidden;
  background: #f0f0f0;
`;
const TitleBar = styled.div`
  height: 33px;
  flex: none;
  background: #fff;
  display: flex;
  align-items: center;
  padding-left: 4px;
`;
const TitleText = styled.span`
  margin-left: 3px;
`;
const WinButtons = styled.div`
  margin-left: auto;
  display: flex;
`;
const WinBtn = styled.div`
  width: 71px;
  height: 33px;
  display: flex;
  align-items: center;
  justify-content: center;
`;
const MenuBar = styled.div`
  height: 31px;
  flex: none;
  display: flex;
  align-items: center;
  padding: 1px 0 0 13px;
  background: #f5f5f5;
  box-sizing: border-box;
  border-bottom: 1px solid #d9d9d9;
`;
const MenuEntry = styled.div`
  width: ${(p) => p.$w}px;
  flex: none;
  white-space: nowrap;
`;
const Acc = styled.span`
  text-decoration: underline;
  text-underline-offset: 2px;
  text-decoration-thickness: 1px;
`;

const ToolBar = styled.div`
  height: ${(p) => p.$h || 43}px;
  flex: none;
  box-sizing: border-box;
  display: flex;
  align-items: center;
  padding: ${(p) => p.$top || 0}px 0 0 2px;
  background: linear-gradient(#fbfbfb, #efefef);
  border-bottom: 1px solid #bdbdbd;
`;
const HandleBox = styled.div`
  width: ${(p) => p.$w}px;
  flex: none;
  box-sizing: border-box;
  padding-left: ${(p) => p.$pad}px;
`;
const Dots = styled.div`
  width: 5px;
  height: 20px;
  background-image: radial-gradient(circle, #b4b4b4 0.8px, transparent 1px);
  background-size: 3px 3.3px;
`;
const Handle = ({ w = 25, pad = 14 }) => (
  <HandleBox $w={w} $pad={pad}>
    <Dots />
  </HandleBox>
);
const Sep = styled.div`
  width: 10px;
  flex: none;
  height: 24px;
  background: linear-gradient(#c8c8c8, #c8c8c8) center / 1px 100% no-repeat;
`;
const ToolBtn = styled.div`
  width: 33px;
  height: 31px;
  flex: none;
  box-sizing: border-box;
  display: flex;
  align-items: center;
  justify-content: center;
  margin-left: ${(p) => p.$ml || 0}px;
  border-radius: 3px;
  ${(p) => p.$on && 'background: #dcdcdc; border: 1px solid #adadad;'}
`;
const DropBox = styled.div`
  width: 18px;
  flex: none;
  display: flex;
  justify-content: center;
`;
const Tri = styled.div`
  width: 0;
  height: 0;
  flex: none;
  border-left: 6px solid transparent;
  border-right: 6px solid transparent;
  border-top: 6px solid ${(p) => (p.$off ? '#aaa' : '#555')};
`;
const Drop = ({ off }) => (
  <DropBox>
    <Tri $off={off} />
  </DropBox>
);

// tokens: "h:w:pad" handle, "|" separator, "v" / "v~" dropdown, "~name" disabled, "*name" pressed
const Bar = ({ items }) =>
  items.map((it, i) => {
    if (it[0] === 'h' && it[1] === ':') {
      const [, w, pad] = it.split(':');
      return <Handle key={i} w={+w} pad={+pad} />;
    }
    if (it === '|') return <Sep key={i} />;
    if (it === 'v') return <Drop key={i} />;
    if (it === 'v~') return <Drop key={i} off />;
    const off = it[0] === '~';
    const on = it[0] === '*';
    return (
      <ToolBtn key={i} $on={on}>
        <Icon name={off || on ? it.slice(1) : it} off={off} />
      </ToolBtn>
    );
  });

const BAR1 = ['h:16.5:6.5', 'new', 'open', 'save', 'newLayout', 'layouts', 'styleMgr', 'h:23:13', '*pan', 'panSel', 'zoomIn', 'zoomOut', 'zoomFull', '~zoomSel', 'zoomLayer', 'zoomNative', 'zoomLast', '~zoomNext', 'newMap', 'newBookmark', 'bookmarks', 'clock', 'refresh', 'h:25:13', 'identify', '~attrTable', '~abacus', 'gear', 'sigma', 'ruler', 'v', 'mapTip', '~tipAction', 'v~', 'textAnn', 'v'];
const BAR2 = ['h:16.5:6.5', 'addLayers', 'geoPkg', 'newVec', 'newFeather', 'chip', '|', 'newMesh', '|', 'h:25:14', '~toggleEdit', '~pencil', '~saveEdit', '~nodes', '~vertexTool', 'v~', '~attrEdit', '~trash', '~cut', '~copy', '~paste', '~undo', '~redo', 'h:22.5:14', '~labelAbc', '~pieBar', '|', 'labelTemp', 'labelRed', '|', '~labelRule', '~labelEye', '~labelMove', '~labelRot', '~labelPen', 'h:25:14', 'globeTrash', '*globeZoom', 'globeBinoc', 'h:24:14', 'help', 'h:20:14'];
const BAR3 = ['h:16.5:6.5', 'histRed', 'histRedArrow', 'histGray', 'histGrayArrow', 'sunUp', 'sunDown', 'contUp', 'contDown'];
const BAR4_A = ['h:16.5:6.5', '~select', 'v~', '~attrList', 'v~', 'deselect', 'v', 'h:23.5:14', 'scpBand', 'scpZoom'];

// ---- SCP widgets ----
const ToggleLabel = styled.div`
  width: ${(p) => p.$w}px;
  height: 26px;
  flex: none;
  display: flex;
  align-items: center;
  color: #fff;
  font-size: 16.5px;
  background: linear-gradient(90deg, #404040, #a8a8a8);
  margin-left: ${(p) => p.$ml || 0}px;
  white-space: nowrap;
`;
const Ring = styled.div`
  width: 9px;
  height: 9px;
  border-radius: 50%;
  background: #888;
  border: 6px solid #000;
  margin: 0 7px 0 0;
  flex: none;
`;
const DarkLabel = styled.div`
  width: ${(p) => p.$w}px;
  height: 22px;
  flex: none;
  background: #555;
  color: #fff;
  line-height: 22px;
  text-align: center;
  margin-left: ${(p) => p.$ml || 0}px;
  overflow: hidden;
`;
const Spin = styled.div`
  width: ${(p) => p.$w}px;
  height: 26px;
  flex: none;
  box-sizing: border-box;
  display: flex;
  background: #fff;
  border: 1px solid #b5b5b5;
  border-radius: 3px;
  margin-left: ${(p) => p.$ml || 0}px;
`;
const SpinValue = styled.div`
  flex: 1;
  font-size: 16.5px;
  line-height: 24px;
  padding-left: 3px;
  letter-spacing: -0.3px;
  overflow: hidden;
`;
const SpinBtns = styled.div`
  width: 20px;
  flex: none;
  display: flex;
  flex-direction: column;
  align-items: center;
  justify-content: center;
  gap: 3px;
  background: #f2f2f2;
  border-left: 1px solid #c4c4c4;
  border-radius: 0 3px 3px 0;
`;
const Arrow = styled.div`
  width: 0;
  height: 0;
  border-left: 6px solid transparent;
  border-right: 6px solid transparent;
  ${(p) => (p.$up ? 'border-bottom: 7px solid #555;' : 'border-top: 7px solid #555;')}
`;
const SpinBox = ({ w, value, ml }) => (
  <Spin $w={w} $ml={ml}>
    <SpinValue>{value}</SpinValue>
    <SpinBtns>
      <Arrow $up />
      <Arrow />
    </SpinBtns>
  </Spin>
);
const ScpCombo = styled.div`
  width: 79px;
  height: 27px;
  flex: none;
  box-sizing: border-box;
  margin-left: 1px;
  border: 1px solid #b5b5b5;
  border-radius: 3px;
  background: linear-gradient(90deg, #fff 70%, #f2f2f2 70%);
  display: flex;
  align-items: center;
  justify-content: space-between;
  padding: 0 9px 0 3px;
`;

// ---- main area ----
const Main = styled.div`
  flex: 1;
  display: flex;
  min-height: 0;
`;
const LeftBar = styled.div`
  width: 62px;
  flex: none;
  display: flex;
  flex-direction: column;
  padding-top: 7px;
  box-sizing: border-box;
  background: linear-gradient(90deg, #fbfbfb, #efefef);
  border-right: 1px solid #bdbdbd;
`;
const LeftHandle = styled.div`
  width: 18px;
  height: 5px;
  margin: 0 0 6px 23px;
  background-image: radial-gradient(circle, #b4b4b4 0.8px, transparent 1px);
  background-size: 3.3px 3px;
`;
const LeftItem = styled.div`
  height: 32.3px;
  flex: none;
  display: flex;
  align-items: center;
  padding-left: 10px;
  gap: 6px;
`;
const Dock = styled.div`
  width: 425px;
  flex: none;
  display: flex;
  flex-direction: column;
`;
const DockHead = styled.div`
  height: 27px;
  flex: none;
  display: flex;
  align-items: center;
  padding: 0 3px 0 4px;
`;
const DockBtns = styled.div`
  margin-left: auto;
  display: flex;
  gap: 4px;
`;
const DockBtn = styled.svg`
  display: block;
`;
const LayerTools = styled.div`
  height: 30px;
  flex: none;
  box-sizing: border-box;
  display: flex;
  align-items: flex-start;
  padding: 2px 0 0 7px;
  gap: 5.5px;
`;
const ToolTri = styled(Tri)`
  margin-top: 8px;
`;
const Tree = styled.div`
  flex: 1;
  background: #fff;
  border-top: 1px solid #bdbdbd;
  border-left: 1px solid #bdbdbd;
`;
const LayerRow = styled.div`
  height: 27px;
  display: flex;
  align-items: center;
  background: #1583dc;
  padding-left: 9px;
`;
const Twisty = styled.div`
  width: 0;
  height: 0;
  border-left: 6px solid transparent;
  border-right: 6px solid transparent;
  border-top: 6px solid #0d3a66;
`;
const CheckBox = styled.div`
  width: 20px;
  height: 20px;
  box-sizing: border-box;
  margin-left: 13px;
  background: #fff;
  border: 1px solid #9a9a9a;
  display: flex;
  align-items: center;
  justify-content: center;
`;
const LayerIcon = styled.div`
  margin-left: 9px;
  width: 27px;
  height: 27px;
  display: flex;
  align-items: center;
  background: #1a78c8;
`;
const LayerName = styled.span`
  color: #fff;
  font-weight: 700;
  font-size: 16.8px;
  letter-spacing: 0;
  text-decoration: underline;
  text-underline-offset: 2px;
  white-space: nowrap;
`;
const Legend = styled.div`
  height: 27px;
  display: flex;
  align-items: center;
  padding-left: 63px;
  gap: 6px;
  white-space: nowrap;
`;
const Swatch = styled.div`
  width: 20px;
  height: 20px;
  flex: none;
  background: ${(p) => p.$c};
`;
const Splitter = styled.div`
  width: 11px;
  flex: none;
`;
const MapArea = styled.div`
  width: 1087px;
  flex: none;
  box-sizing: border-box;
  background: #fff;
  border: 1px solid #bdbdbd;
  border-width: 1px 1px 0 1px;
  margin-top: 1px;
  display: flex;
  justify-content: center;
  padding-top: 150px;
`;
const MapCanvas = styled.canvas`
  width: 1037px;
  height: 552px;
  image-rendering: pixelated;
  display: block;
`;
const RightGap = styled.div`
  width: 10px;
  flex: none;
  display: flex;
  align-items: center;
  justify-content: center;
  padding-bottom: 52px;
  box-sizing: border-box;
`;
const GapDots = styled.div`
  width: 3px;
  height: 18px;
  background-image: radial-gradient(circle, #c0c0c0 0.7px, transparent 1px);
  background-size: 3px 3px;
`;
const QmsPanel = styled.div`
  flex: 1;
  display: flex;
  flex-direction: column;
  min-width: 0;
`;
const QmsInput = styled.div`
  height: 26px;
  flex: none;
  box-sizing: border-box;
  margin-top: -5px;
  background: #fff;
  border: 1px solid #b5b5b5;
  border-radius: 3px;
  font-size: 15.5px;
  line-height: 24px;
  color: #777;
`;
const QmsRow = styled.div`
  height: 43px;
  flex: none;
  display: flex;
  justify-content: flex-end;
  align-items: flex-start;
  padding-top: 7px;
  box-sizing: border-box;
  gap: 6px;
`;
const QmsButton = styled.div`
  width: 116px;
  height: 30px;
  box-sizing: border-box;
  background: #f2f2f2;
  border: 1px solid #adadad;
  border-radius: 3px;
  text-align: center;
  font-size: 16.5px;
  line-height: 30px;
  letter-spacing: -0.1px;
  white-space: nowrap;
`;
const QmsCombo = styled.div`
  width: 93px;
  height: 28px;
  box-sizing: border-box;
  background: #f2f2f2;
  border: 1px solid #b5b5b5;
  border-radius: 3px;
  display: flex;
  align-items: center;
  justify-content: space-between;
  padding: 0 6px 0 4px;
`;
const QmsList = styled.div`
  flex: 1;
  background: #fff;
  border: 1px solid #bdbdbd;
  border-width: 1px 0 0 1px;
`;

// ---- context menu ----
const Menu = styled.div`
  position: absolute;
  left: 296px;
  top: 312px;
  width: 404px;
  height: 474px;
  box-sizing: border-box;
  background: #fff;
  border: 1px solid #a0a0a0;
  z-index: 5;
`;
const Item = styled.div`
  height: 33px;
  box-sizing: border-box;
  display: flex;
  align-items: center;
  position: relative;
  white-space: nowrap;
  color: ${(p) => (p.$hot ? '#fff' : '#000')};
  ${(p) => p.$hot && 'background: #0078d7; box-shadow: inset 0 0 0 1px #45a6ee;'}
`;
const ItemIcon = styled.div`
  width: 33px;
  margin-left: 4px;
  flex: none;
  display: flex;
  justify-content: center;
  padding-right: 5px;
  box-sizing: border-box;
`;
const SubTri = styled.div`
  position: absolute;
  right: 5px;
  top: 11px;
  width: 0;
  height: 0;
  border-top: 5.5px solid transparent;
  border-bottom: 5.5px solid transparent;
  border-left: 6px solid ${(p) => (p.$hot ? '#c5e0f7' : '#555')};
`;
const MenuLine = styled.div`
  height: 1px;
  margin: 0 6px 1px 6px;
  background: #bdbdbd;
`;
const SubMenu = styled.div`
  position: absolute;
  left: 402px;
  top: 370px;
  width: 322px;
  height: 100px;
  box-sizing: border-box;
  background: #fff;
  border: 1px solid #a0a0a0;
  z-index: 6;
`;
const SubItem = styled(Item)`
  padding-left: 37px;
`;

const LEGEND = [
  ['#000', '0 - Unclassified'],
  ['#005500', '1 - Forest'],
  ['#aa5500', '2 - Buildings'],
  ['#0055ff', '3 - River'],
  ['#00aa00', '4 - Agriculture'],
  ['#aaaa7f', '5 - Road'],
  ['#aaff7f', '6 - Low Vegetation'],
];
const MENU_ITEMS = [
  { t: <><Acc>Z</Acc>oom to Layer</>, i: 'zoomLayer' },
  { t: <><Acc>S</Acc>how in Overview</>, i: 'glasses' },
  { t: 'Copy Layer' },
  { t: <>Re<Acc>n</Acc>ame Layer</> },
  { t: <><Acc>Z</Acc>oom to Native Resolution (100%)</>, i: 'zoomNative' },
  { t: <><Acc>S</Acc>tretch Using Current Extent</> },
  '-',
  { t: <><Acc>D</Acc>uplicate Layer</>, i: 'duplicate' },
  { t: <><Acc>R</Acc>emove Layer...</>, i: 'removeLayer' },
  '-',
  { t: 'Change Data Source...' },
  '-',
  { t: <><Acc>S</Acc>et Layer Scale Visibility...</> },
  { t: 'Set CRS', sub: true },
  '-',
  { t: 'Export', sub: true, hot: true },
  '-',
  { t: 'Styles', sub: true },
  { t: <><Acc>P</Acc>roperties...</> },
];
const MENUS = [
  [70, <>Pr<Acc>o</Acc>ject</>], [48, <><Acc>E</Acc>dit</>], [54, <><Acc>V</Acc>iew</>], [57, <><Acc>L</Acc>ayer</>],
  [82, <><Acc>S</Acc>ettings</>], [74, <><Acc>P</Acc>lugins</>], [67, <>Vect<Acc>o</Acc>r</>], [66, <><Acc>R</Acc>aster</>],
  [90, <><Acc>D</Acc>atabase</>], [54, <><Acc>W</Acc>eb</>], [60, <><Acc>M</Acc>esh</>], [49, 'SCP'], [101, <>Pro<Acc>c</Acc>essing</>], [50, <><Acc>H</Acc>elp</>],
];
const LEFT = [['addVec'], ['addRaster'], ['addMesh'], ['addCsv'], ['addFeather'], ['addMeshV'], ['addPg', 1], ['addWms', 1], ['addWcs'], ['addWfs', 1], ['addSpatial', 1]];

// forest patches, in coordinates of the 1568 square map crop: cx, cy, rx, ry
const FOREST = [
  [1265, 830, 100, 125], [1110, 540, 75, 95], [1145, 640, 32, 60], [1090, 440, 30, 38], [1190, 370, 42, 35],
  [1330, 570, 75, 75], [1300, 290, 22, 45], [1400, 750, 32, 60], [1380, 700, 28, 34], [700, 700, 52, 46],
  [590, 780, 22, 35], [960, 640, 32, 46], [1030, 780, 16, 30], [900, 750, 16, 36], [730, 560, 24, 34],
  [640, 810, 16, 24], [380, 760, 30, 76], [1530, 830, 22, 36], [760, 1200, 76, 76], [770, 1290, 35, 60],
  [830, 1350, 38, 56], [1150, 1340, 32, 58], [1065, 1240, 16, 36], [1220, 1240, 13, 28], [1400, 1320, 22, 36],
  [1470, 1460, 22, 36], [300, 1360, 38, 68], [285, 1460, 16, 24], [575, 1270, 16, 24], [750, 1420, 16, 24],
  [1330, 1240, 16, 16], [770, 1040, 22, 58], [950, 1110, 11, 24], [1210, 1000, 16, 24], [980, 320, 22, 46],
  [940, 270, 16, 24], [1145, 220, 16, 36], [1385, 250, 16, 24], [1275, 380, 16, 16], [1470, 210, 16, 16],
  [800, 90, 11, 36], [1360, 130, 11, 16], [1530, 400, 16, 36], [1440, 1020, 11, 36], [1090, 1110, 11, 16],
  [700, 1290, 16, 24], [920, 1180, 11, 16], [1505, 1520, 16, 24], [285, 500, 9, 28], [1040, 920, 22, 28],
];
// water dots are denser here
const WATER = [[540, 130, 60, 140], [560, 440, 90, 120], [340, 700, 45, 65], [200, 1270, 70, 80], [150, 1470, 60, 60], [620, 200, 45, 45], [1270, 610, 30, 30]];
// places kept clear of green fields
const OPEN = [[470, 270, 100, 80], [920, 900, 140, 110], [1090, 850, 60, 70], [1000, 1450, 170, 90], [100, 1480, 70, 50], [700, 330, 60, 50], [400, 1150, 70, 40]];
const RIVERS = [
  { w: 2, p: [[270, 760], [272, 840]] },
  { w: 2, p: [[430, 1125], [432, 1270], [460, 1300], [510, 1258], [548, 1300], [535, 1400], [545, 1450], [590, 1520], [595, 1568]] },
  { w: 1, p: [[1250, 625], [1275, 590], [1285, 615]] },
  { w: 1, p: [[1330, 625], [1390, 660]] },
  { w: 1, p: [[1295, 775], [1340, 762]] },
];

const hash = (x, y) => {
  const h = Math.sin(x * 127.1 + y * 311.7) * 43758.5453;
  return h - Math.floor(h);
};
const smooth = (t) => t * t * (3 - 2 * t);
const vnoise = (x, y) => {
  const xi = Math.floor(x), yi = Math.floor(y);
  const fx = smooth(x - xi), fy = smooth(y - yi);
  const a = hash(xi, yi), b = hash(xi + 1, yi), c = hash(xi, yi + 1), d = hash(xi + 1, yi + 1);
  return a + (b - a) * fx + (c - a) * fy + (a - b - c + d) * fx * fy;
};
const fbm = (x, y) => (vnoise(x, y) * 4 + vnoise(x * 2.1 + 9, y * 2.1 + 4) * 2 + vnoise(x * 4.3 + 3, y * 4.3 + 7)) / 7;
const blobAt = (list, zx, zy) => {
  let best = 0;
  for (const [cx, cy, rx, ry] of list) {
    const dx = (zx - cx) / rx, dy = (zy - cy) / ry;
    const d = dx * dx + dy * dy;
    if (d < 4) best = Math.max(best, Math.exp(-d * 0.9));
  }
  return best;
};

const drawMap = (canvas) => {
  const W = canvas.width, H = canvas.height;
  const ctx = canvas.getContext('2d');
  const img = ctx.createImageData(W, H);
  const put = (i, j, c) => {
    if (i < 0 || j < 0 || i >= W || j >= H) return;
    const o = (j * W + i) * 4;
    img.data[o] = c[0]; img.data[o + 1] = c[1]; img.data[o + 2] = c[2]; img.data[o + 3] = 255;
  };
  const BROWN = [170, 85, 0], FOR = [0, 85, 0], AGR = [0, 170, 0], RIV = [0, 85, 255], ROAD = [170, 170, 127], VEG = [170, 255, 127];
  for (let j = 0; j < H; j++) {
    for (let i = 0; i < W; i++) {
      const zx = (i / W) * 1568, zy = (j / H) * 1568;
      const v = j / H, u = i / W;
      const r = hash(i + 0.31, j + 0.77);
      const r2 = hash(i * 1.7 + 5.1, j * 1.3 + 2.3);
      const n = fbm(i / 2.3 + 0.4, j / 1.9 + 0.7);
      const n2 = fbm(i / 4.1 + 20, j / 3.7 + 50);
      const patch = fbm(i / 24 + 40, j / 24 + 11);
      const f = blobAt(FOREST, zx, zy);
      const clear = blobAt(OPEN, zx, zy);
      let c = BROWN;
      // green fields: dense along the top and left, thin to the south-east
      const field = 0.5 - v * 0.2 + (patch - 0.5) * 0.34 - clear * 0.15;
      if (n + (r - 0.5) * 0.2 < field) c = AGR;
      // tan road dots and pale vegetation
      const vegP = 0.012 + (u < 0.22 && v > 0.7 ? 0.06 : 0) + (u < 0.45 && v < 0.55 ? 0.014 : 0);
      if (r2 < vegP) c = VEG;
      else if (r2 > 0.99 - (v > 0.6 && u > 0.4 ? 0.02 : 0)) c = ROAD;
      // scattered woodland, more of it on the east side
      if (fbm(i / 2.4 + 70, j / 2.1 + 30) > 0.71 - (u > 0.45 ? 0.02 : 0)) c = FOR;
      const w = blobAt(WATER, zx, zy);
      if (r < 0.006 || (w > 0.05 && fbm(i / 2.3 + 200, j / 2.7) + (r - 0.5) * 0.14 < 0.28 + w * 0.1)) c = RIV;
      if (f + (n2 - 0.5) * 1.7 + (r - 0.5) * 0.12 > 0.46) c = FOR;
      put(i, j, c);
    }
  }
  // rivers on top
  for (const { w, p } of RIVERS) {
    for (let s = 0; s < p.length - 1; s++) {
      const [x0, y0] = p[s], [x1, y1] = p[s + 1];
      const steps = 80;
      for (let t = 0; t <= steps; t++) {
        const i = Math.round(((x0 + ((x1 - x0) * t) / steps) / 1568) * W);
        const j = Math.round(((y0 + ((y1 - y0) * t) / steps) / 1568) * H);
        put(i, j, RIV);
        if (w > 1) { put(i + 1, j, RIV); put(i, j + 1, RIV); }
      }
    }
  }
  ctx.putImageData(img, 0, 0);
};

const RasterMap = () => {
  const ref = useRef(null);
  useEffect(() => {
    drawMap(ref.current);
  }, []);
  return <MapCanvas ref={ref} width={423} height={225} />;
};

const QgisLogo = () => (
  <svg width="24" height="24" viewBox="0 0 24 24">
    <circle cx="11" cy="11" r="8.5" fill="none" stroke="#589632" strokeWidth="4.5" />
    <path d="M14 15l7 7" stroke="#589632" strokeWidth="5" />
    <path d="M11 7l4 4-4 4-4-4z" fill="#ee7913" />
  </svg>
);
const DockIcons = () => (
  <DockBtns>
    <DockBtn width="12" height="12" viewBox="0 0 12 12">
      <rect x=".5" y=".5" width="11" height="11" rx="2" fill="#e8e8e8" stroke="#666" />
      <rect x="4.5" y="2.5" width="5" height="5" fill="none" stroke="#444" />
      <rect x="2.5" y="4.5" width="5" height="5" fill="#e8e8e8" stroke="#444" />
    </DockBtn>
    <DockBtn width="12" height="12" viewBox="0 0 12 12">
      <rect x=".5" y=".5" width="11" height="11" rx="2" fill="#e8e8e8" stroke="#666" />
      <path d="M3 3l6 6M9 3l-6 6" stroke="#222" strokeWidth="1.5" />
    </DockBtn>
  </DockBtns>
);

export default function App() {
  return (
    <>
      <GlobalStyle />
      <Win>
        <TitleBar>
          <QgisLogo />
          <TitleText>*Untitled Project — QGIS</TitleText>
          <WinButtons>
            <WinBtn>
              <svg width="16" height="2"><rect width="16" height="1" fill="#111" /></svg>
            </WinBtn>
            <WinBtn>
              <svg width="16" height="16" fill="none" stroke="#111">
                <rect x="1.5" y="4.5" width="10" height="10" />
                <path d="M4.5 4.5v-3h10v10h-3" />
              </svg>
            </WinBtn>
            <WinBtn>
              <svg width="18" height="18" stroke="#111" strokeWidth="1.1"><path d="M1 1l16 16M17 1L1 17" /></svg>
            </WinBtn>
          </WinButtons>
        </TitleBar>
        <MenuBar>
          {MENUS.map(([w, t], i) => (
            <MenuEntry key={i} $w={w}>{t}</MenuEntry>
          ))}
        </MenuBar>
        <ToolBar><Bar items={BAR1} /></ToolBar>
        <ToolBar><Bar items={BAR2} /></ToolBar>
        <ToolBar><Bar items={BAR3} /></ToolBar>
        <ToolBar $h={42} $top={1}>
          <Bar items={BAR4_A} />
          <ToggleLabel $w={87}><Ring />RGB =</ToggleLabel>
          <ScpCombo>-<Tri /></ScpCombo>
          <ToolBtn $ml={2}><Icon name="scpPct" /></ToolBtn>
          <ToolBtn><Icon name="scpSigma" /></ToolBtn>
          <ToolBtn $ml={2}><Icon name="scpPlusZoom" /></ToolBtn>
          <ToggleLabel $w={87} $ml={-1}><Ring />ROI</ToggleLabel>
          <ToolBtn $ml={1}><Icon name="scpRoi" /></ToolBtn>
          <ToolBtn><Icon name="scpPlus" /></ToolBtn>
          <ToolBtn><Icon name="scpReset" /></ToolBtn>
          <DarkLabel $w={38}>Dist</DarkLabel>
          <SpinBox w={100} value="0,010000" />
          <DarkLabel $w={33} $ml={1}>Min</DarkLabel>
          <SpinBox w={59} value="60" ml={2} />
          <DarkLabel $w={39} $ml={2}>Max</DarkLabel>
          <SpinBox w={59} value="100" ml={1} />
          <ToolBtn $ml={2}><Icon name="scpMag" /></ToolBtn>
          <ToggleLabel $w={95}><Ring />Preview</ToggleLabel>
          <ToolBtn><Icon name="scpRun" /></ToolBtn>
          <ToolBtn $ml={1}><Icon name="scpReset" /></ToolBtn>
          <DarkLabel $w={15}>T</DarkLabel>
          <SpinBox w={50} value="0" ml={1} />
          <DarkLabel $w={15} $ml={2}>S</DarkLabel>
          <SpinBox w={59} value="200" ml={1} />
          <ToolBtn $ml={1}><Icon name="scpBin" /></ToolBtn>
          <ToolBtn><Icon name="scpKml" /></ToolBtn>
          <Handle w={25} pad={15} />
          <ToolBtn><Icon name="scpGrid" /></ToolBtn>
          <SpinBox w={59} value="0" ml={1} />
          <ToolBtn $ml={1}><Icon name="scpTile" /></ToolBtn>
          <SpinBox w={59} value="1" ml={1} />
          <ToolBtn $ml={1}><Icon name="scpTile" /></ToolBtn>
          <SpinBox w={59} value="2" ml={1} />
          <ToolBtn $ml={1}><Icon name="scpTile" /></ToolBtn>
          <ToolBtn $ml={1}><Icon name="scpUndo" /></ToolBtn>
        </ToolBar>
        <Main>
          <LeftBar>
            <LeftHandle />
            {LEFT.map(([name, drop]) => (
              <LeftItem key={name}>
                <Icon name={name} />
                {drop && <Tri />}
              </LeftItem>
            ))}
          </LeftBar>
          <Dock>
            <DockHead>Layers<DockIcons /></DockHead>
            <LayerTools>
              <Icon name="brush" size={20} />
              <Icon name="addGroup" size={20} />
              <Icon name="eye" size={20} />
              <Icon name="funnel" size={20} />
              <Icon name="epsilon" size={20} off />
              <ToolTri $off />
              <Icon name="expand" size={20} />
              <Icon name="collapse" size={20} />
              <Icon name="remove" size={20} />
            </LayerTools>
            <Tree>
              <LayerRow>
                <Twisty />
                <CheckBox>
                  <svg width="14" height="14" viewBox="0 0 14 14"><path d="M2 7l4 5 6-11" fill="none" stroke="#000" strokeWidth="2.2" /></svg>
                </CheckBox>
                <LayerIcon>
                  <svg width="20" height="20" viewBox="0 0 20 20">
                    <rect width="20" height="20" fill="#7db6e8" />
                    <path d="M0 0h7v7H0zM13 0h7v7h-7zM7 7h6v6H7zM0 13h7v7H0zM13 13h7v7h-7z" fill="#1d4f82" />
                  </svg>
                </LayerIcon>
                <LayerName>Classification Output</LayerName>
              </LayerRow>
              {LEGEND.map(([c, t]) => (
                <Legend key={t}>
                  <Swatch $c={c} />
                  {t}
                </Legend>
              ))}
            </Tree>
          </Dock>
          <Splitter />
          <MapArea>
            <RasterMap />
          </MapArea>
          <RightGap><GapDots /></RightGap>
          <QmsPanel>
            <DockHead>Search QMS<DockIcons /></DockHead>
            <QmsInput>Search string...</QmsInput>
            <QmsRow>
              <QmsButton>Filter by extent</QmsButton>
              <QmsCombo>All<Tri /></QmsCombo>
            </QmsRow>
            <QmsList />
          </QmsPanel>
        </Main>
        <Menu>
          {MENU_ITEMS.map((m, i) =>
            m === '-' ? (
              <MenuLine key={i} />
            ) : (
              <Item key={i} $hot={m.hot}>
                <ItemIcon>{m.i && <Icon name={m.i} size={26} />}</ItemIcon>
                {m.t}
                {m.sub && <SubTri $hot={m.hot} />}
              </Item>
            )
          )}
          <SubMenu>
            <SubItem $hot>Save As...</SubItem>
            <SubItem>Save as Layer Definition File...</SubItem>
            <SubItem>Save as QGIS Layer Style File...</SubItem>
          </SubMenu>
        </Menu>
      </Win>
    </>
  );
}
